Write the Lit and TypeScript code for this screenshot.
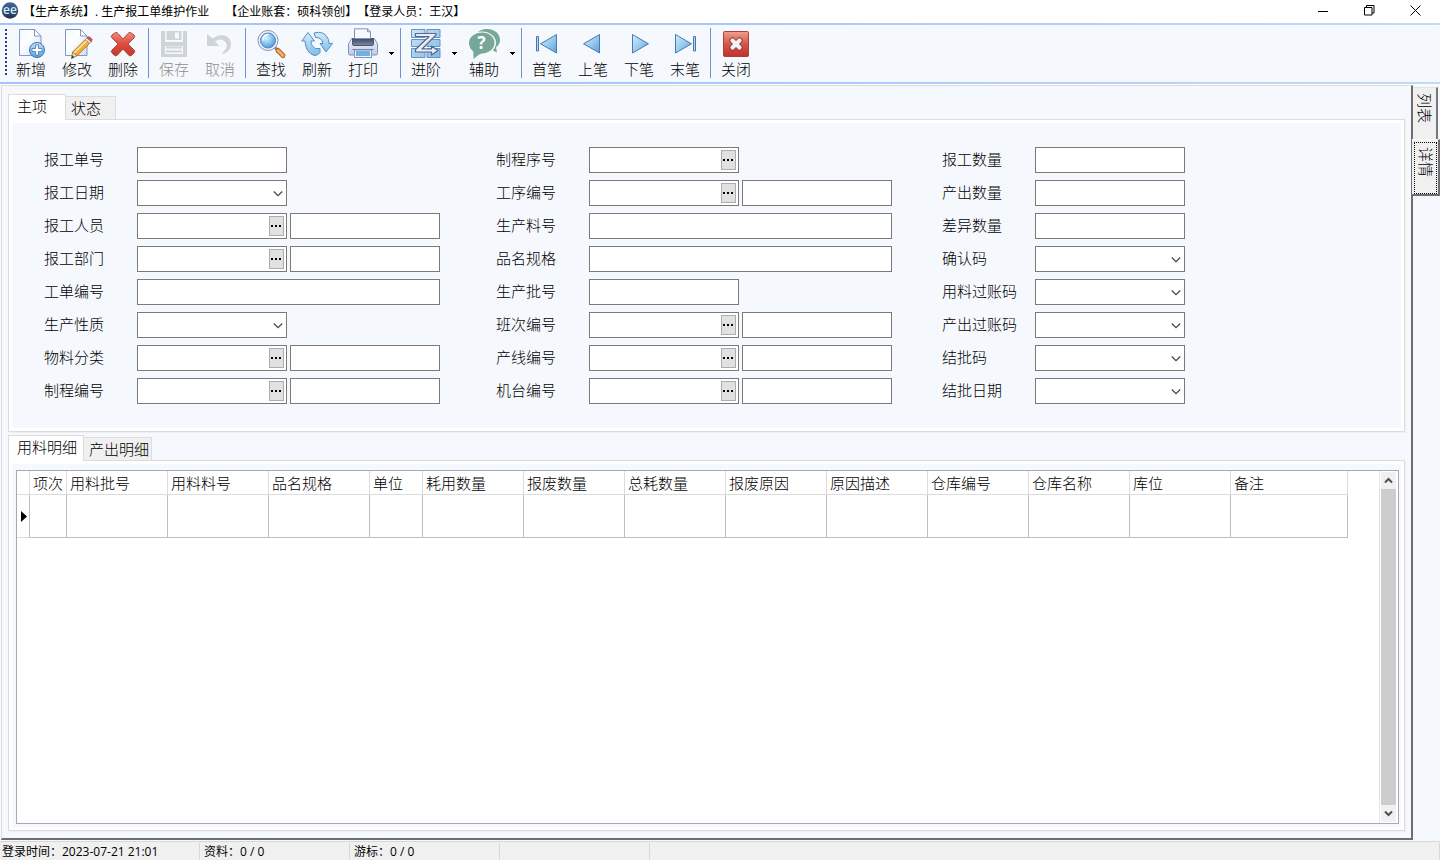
import { LitElement, html, svg, css, nothing } from "lit";
import { customElement, state } from "lit/decorators.js";
import { classMap } from "lit/directives/class-map.js";

type Field = { label: string; kind: "text" | "select" | "lookup" | "wide"; extra?: boolean };
type Tool = { id: string; label: string; disabled?: boolean; menu?: boolean };

const FORM: Field[][] = [
  [
    { label: "报工单号", kind: "text" },
    { label: "报工日期", kind: "select" },
    { label: "报工人员", kind: "lookup", extra: true },
    { label: "报工部门", kind: "lookup", extra: true },
    { label: "工单编号", kind: "wide" },
    { label: "生产性质", kind: "select" },
    { label: "物料分类", kind: "lookup", extra: true },
    { label: "制程编号", kind: "lookup", extra: true },
  ],
  [
    { label: "制程序号", kind: "lookup" },
    { label: "工序编号", kind: "lookup", extra: true },
    { label: "生产料号", kind: "wide" },
    { label: "品名规格", kind: "wide" },
    { label: "生产批号", kind: "text" },
    { label: "班次编号", kind: "lookup", extra: true },
    { label: "产线编号", kind: "lookup", extra: true },
    { label: "机台编号", kind: "lookup", extra: true },
  ],
  [
    { label: "报工数量", kind: "text" },
    { label: "产出数量", kind: "text" },
    { label: "差异数量", kind: "text" },
    { label: "确认码", kind: "select" },
    { label: "用料过账码", kind: "select" },
    { label: "产出过账码", kind: "select" },
    { label: "结批码", kind: "select" },
    { label: "结批日期", kind: "select" },
  ],
];

const TOOLS: Tool[][] = [
  [
    { id: "add", label: "新增" },
    { id: "edit", label: "修改" },
    { id: "delete", label: "删除" },
  ],
  [
    { id: "save", label: "保存", disabled: true },
    { id: "undo", label: "取消", disabled: true },
  ],
  [
    { id: "find", label: "查找" },
    { id: "refresh", label: "刷新" },
    { id: "print", label: "打印", menu: true },
  ],
  [
    { id: "advanced", label: "进阶", menu: true },
    { id: "help", label: "辅助", menu: true },
  ],
  [
    { id: "first", label: "首笔" },
    { id: "prev", label: "上笔" },
    { id: "next", label: "下笔" },
    { id: "last", label: "末笔" },
  ],
  [{ id: "close", label: "关闭" }],
];

const COLUMNS: [string, number][] = [
  ["项次", 37],
  ["用料批号", 101],
  ["用料料号", 101],
  ["品名规格", 101],
  ["单位", 53],
  ["耗用数量", 101],
  ["报废数量", 101],
  ["总耗数量", 101],
  ["报废原因", 101],
  ["原因描述", 101],
  ["仓库编号", 101],
  ["仓库名称", 101],
  ["库位", 101],
  ["备注", 117],
];

const page = svg`
  <path d="M4.500 1.500h15l6.500 6.500v19.500h-21.500z" fill="url(#paper)" stroke="#8396c6"/>
  <path d="M19.500 1.500v6.500h6.500z" fill="#fff" stroke="#8396c6" stroke-linejoin="round"/>`;

const paperFill = svg`<linearGradient id="paper" x1="0" y1="0" x2="1" y2="1"><stop offset="0" stop-color="#f2f6fd"/><stop offset=".4" stop-color="#fff"/><stop offset="1" stop-color="#cfdcf2"/></linearGradient>`;

const navFill = svg`<defs><linearGradient id="nav" x1="0" y1="0" x2="1" y2="1"><stop offset="0" stop-color="#d4ecfb"/><stop offset=".5" stop-color="#9accef"/><stop offset="1" stop-color="#5b9fd8"/></linearGradient></defs>`;

const ICONS: Record<string, unknown> = {
  add: svg`
    <defs>
      ${paperFill}
      <linearGradient id="addBlue" x1="0" y1="0" x2="0" y2="1"><stop offset="0" stop-color="#c4e2f7"/><stop offset="1" stop-color="#5aa3dc"/></linearGradient>
    </defs>
    ${page}
    <circle cx="22" cy="22" r="7.500" fill="url(#addBlue)" stroke="#3c6fae"/>
    <path d="M20.500 17h3v3.500h3.500v3h-3.500v3.500h-3v-3.500h-3.500v-3h3.500z" fill="#fff" stroke="#3f74b4" stroke-width=".8"/>`,
  edit: svg`
    <defs>${paperFill}</defs>
    ${page}
    <path d="M10.500 30.500l1.200-6.500 4.300 3.800z" fill="#f5d9b2" stroke="#7d5a3a" stroke-width=".7"/>
    <path d="M10.500 30.500l.6-3.200 2.300 2z" fill="#333"/>
    <path d="M11.700 24l12.600-12.500 4.300 3.900-12.600 12.400z" fill="#f3ad3f" stroke="#9a6a22" stroke-width=".8"/>
    <path d="M13 25l12.600-12.400" stroke="#ffe29a" stroke-width="1.500"/>
    <path d="M24.300 11.500l1.700-1.700 4.300 3.900-1.700 1.700z" fill="#e6e8ee" stroke="#777" stroke-width=".6"/>
    <path d="M26 9.800l.9-.8q1-.6 2 .2l1.800 1.600q.8 1 .1 1.900l-.5 1z" fill="#dd5a4c" stroke="#a33" stroke-width=".7"/>`,
  delete: svg`
    <defs><linearGradient id="delRed" x1="0" y1="0" x2="0" y2="1"><stop offset="0" stop-color="#f08b7b"/><stop offset=".5" stop-color="#dc4b3e"/><stop offset="1" stop-color="#c23a31"/></linearGradient></defs>
    <path d="M8.500 4.500Q10 4 11.500 6L16 11 20.500 6Q22 4 23.500 4.500L27 7Q28.500 8.500 27 10L21 16 27 22Q28.500 23.500 27 25L24.500 27.500Q23 28.500 21.500 27L16 21 10.500 27Q9 28.500 7.500 27.500L5 25Q3.500 23.500 5 22L11 16 5 10Q3.500 8.500 5 7z" fill="url(#delRed)" stroke="#b5453c"/>`,
  save: svg`
    <path d="M3 3h4v11h18V3h4v26H3z" fill="#cfd4d6"/>
    <path d="M8.500 3h15v9h-15z" fill="#cfd4d6"/>
    <path d="M17 4.500h4v6h-4z" fill="#f5f9fd"/>
    <path d="M3 16h26v13H3z" fill="#cfd4d6"/>
    <path d="M7 18h18v8H7z" fill="#f5f9fd"/>
    <path d="M8 19.500h16M8 23.500h16" stroke="#cfd4d6" stroke-width="2"/>`,
  undo: svg`
    <path d="M3 6v12h12.500l-4.500-4.500q4.500-3.800 9-.8c5 3.800 2.500 9.300-2 11.800l1.500 1.500q7-3 7.500-9.500c.2-7.500-8-13-18.500-6z" fill="#cfd4d6"/>`,
  find: svg`
    <defs><radialGradient id="lens" cx=".4" cy=".35" r=".7"><stop offset="0" stop-color="#d9f0ff"/><stop offset=".7" stop-color="#6bb4ee"/><stop offset="1" stop-color="#4a90d8"/></radialGradient></defs>
    <path d="M19.500 19l3 3" stroke="#7082a8" stroke-width="3"/>
    <path d="M23 22.500l5 5" stroke="#a9641e" stroke-width="5" stroke-linecap="round"/>
    <path d="M23 22.500l5 5" stroke="#f3b065" stroke-width="3" stroke-linecap="round"/>
    <circle cx="13" cy="12.500" r="10" fill="#eef3fa" stroke="#8795bd"/>
    <circle cx="13" cy="12.500" r="7.500" fill="url(#lens)" stroke="#5a7fb8"/>
    <path d="M8 12q.5-5 5-5.500" stroke="#fff" stroke-width="1.500" fill="none" stroke-linecap="round"/>`,
  refresh: svg`
    <defs><linearGradient id="ref" x1="0" y1="0" x2="0" y2="1"><stop offset="0" stop-color="#d5edfb"/><stop offset="1" stop-color="#7dbbe8"/></linearGradient></defs>
    <g fill="url(#ref)" stroke="#5b8dc5" stroke-linejoin="round">
      <path d="M7 4.500l6.500 8.500h-3.500q0 5 4.500 7.500h4.500v4q-1.500 3-6 3Q4.500 24.500 4 13H.8z"/>
      <path d="M13 5q10.500-3 14.500 6.500l.5 4h3.500l-6.500 8.500-6-8.500h3q-1-6-7.500-6z"/>
    </g>`,
  print: svg`
    <defs>
      <linearGradient id="prBody" x1="0" y1="0" x2="0" y2="1"><stop offset="0" stop-color="#f3f6fc"/><stop offset="1" stop-color="#bccae4"/></linearGradient>
      <linearGradient id="prDark" x1="0" y1="0" x2="0" y2="1"><stop offset="0" stop-color="#3d475f"/><stop offset="1" stop-color="#7d8ba8"/></linearGradient>
    </defs>
    <path d="M4.500 10.500h23l3 5.500v9.500q0 1.500-1.500 1.500H3q-1.500 0-1.500-1.500v-9.500z" fill="url(#prBody)" stroke="#8292b8"/>
    <path d="M5.500 10.500h21v5.500q0 1.500-1.500 1.500h-18q-1.500 0-1.500-1.500z" fill="url(#prDark)" stroke="#4a5672"/>
    <path d="M7.500.8h13l3 3v6.700h-16z" fill="#f7f9fd" stroke="#8292b8"/>
    <path d="M20.500.8v3h3" fill="none" stroke="#8292b8"/>
    <path d="M5.500 21.500h21" stroke="#66769b"/>
    <path d="M7.500 22h17v7.500h-17z" fill="#eff4fb" stroke="#8292b8"/>
    <path d="M9 23h14v5h-14z" fill="#6fb3e6"/>`,
  advanced: svg`
    <defs><linearGradient id="adv" x1="0" y1="0" x2="1" y2="1"><stop offset="0" stop-color="#cde5f7"/><stop offset="1" stop-color="#82b8e2"/></linearGradient></defs>
    <path d="M1.500 1.500h13.500v8h-13.500zM17 1.500h13v8h-13zM1.500 11.500h13.500v7h-13.500zM17 11.500h13v7h-13zM1.500 20.500h13.500v9h-13.500zM17 20.500h13v9h-13z" fill="url(#adv)" stroke="#6295ca"/>
    <path d="M5.500 5.500h20.500v1.500l-14 14h9.500v-3l6.500 4.500-6.500 4.500v-3h-16v-2.500l13.500-13h-13.500z" fill="#e9edf5" stroke="#57668a" stroke-width="1.200" stroke-linejoin="round"/>`,
  help: svg`
    <path d="M8 6Q12 1 19 1C27 1 32 6 32 12q0 4-4 7.500l1 5-6-3z" fill="#76a797"/>
    <ellipse cx="14" cy="15" rx="14" ry="11.500" fill="#f5f9fd"/>
    <path d="M14 4.500c7 0 12.500 4.500 12.500 10.300S21 25.500 14 25.500q-2 0-3.500 1.500L5.500 31l-.2-7.500Q1 20 1 15C1 9 7 4.500 14 4.500z" fill="#76a797"/>
    <text class="mark" x="13.500" y="21" text-anchor="middle">?</text>`,
  first: svg`${navFill}
    <path d="M5.500 8.500h2v14.500h-2z" fill="#a9d4f2" stroke="#4a78b4"/>
    <path d="M25.500 6.500v18.500l-16-9.200z" fill="url(#nav)" stroke="#4a78b4" stroke-linejoin="round"/>`,
  prev: svg`${navFill}<path d="M22.500 6.500v18.500l-16-9.200z" fill="url(#nav)" stroke="#4a78b4" stroke-linejoin="round"/>`,
  next: svg`${navFill}<path d="M9.500 6.500v18.500l16-9.200z" fill="url(#nav)" stroke="#4a78b4" stroke-linejoin="round"/>`,
  last: svg`${navFill}
    <path d="M6.500 6.500v18.500l16-9.200z" fill="url(#nav)" stroke="#4a78b4" stroke-linejoin="round"/>
    <path d="M24.500 8.500h2v14.500h-2z" fill="#a9d4f2" stroke="#4a78b4"/>`,
  close: svg`
    <defs><linearGradient id="cl" x1="0" y1="0" x2="0" y2="1"><stop offset="0" stop-color="#efa08e"/><stop offset=".5" stop-color="#d4574a"/><stop offset="1" stop-color="#c0302a"/></linearGradient></defs>
    <rect x="3.500" y="3.500" width="25" height="25" rx="1" fill="url(#cl)" stroke="#a8423a"/>
    <path d="M12.500 12.500l7 7M19.500 12.500l-7 7" stroke="#933" stroke-width="6" stroke-linecap="round"/>
    <path d="M12.500 12.500l7 7M19.500 12.500l-7 7" stroke="#f1f3f8" stroke-width="4.200" stroke-linecap="round"/>`,
};

@customElement("tool-icon")
class ToolIcon extends LitElement {
  static properties = { name: {} };
  declare name: string;
  static styles = css`
    :host { display: block; width: 32px; height: 32px; }
    svg { display: block; }
    .mark { font: bold 17px "Open Sans", sans-serif; fill: #fff; }
  `;
  render() {
    return html`<svg width="32" height="32" viewBox="0 0 32 32" fill="none" aria-hidden="true">${ICONS[this.name]}</svg>`;
  }
}

@customElement("app-root")
class AppRoot extends LitElement {
  @state() private upper = 0;
  @state() private lower = 0;
  @state() private side = 1;

  static styles = css`
    :host {
      display: block;
      --bg: #f5f9fd;
      --line: #dcdcdc;
      --field: #7a7a7a;
      color: #000;
      font-family: "Noto Sans CJK SC", sans-serif;
      font-size: 15px;
      font-weight: 300;
      line-height: 20px;
      text-spacing-trim: space-all;
    }
    * { box-sizing: border-box; }
    button, input, select { font: inherit; color: inherit; margin: 0; padding: 0; border: 0; border-radius: 0; background: none; }
    .window { display: flex; flex-direction: column; height: 100vh; background: var(--bg); overflow: hidden; }

    .title { display: flex; align-items: center; height: 23px; flex: none; padding-right: 2px; background: #fff; font-family: "Open Sans", "Noto Sans CJK SC", sans-serif; font-size: 12px; font-weight: 400; }
    .logo { display: block; margin: 0 3px 0 1px; }
    .logo text { font: 600 12px "Open Sans", sans-serif; fill: #d6e9f6; }
    .caption { flex: 1; display: flex; gap: 16px; white-space: pre; }
    .winbtn { width: 46px; height: 23px; padding-bottom: 2px; display: grid; place-items: center; }
    .winbtn svg { display: block; }

    .toolbar { display: flex; flex: none; height: 61px; padding: 3px 0 2px 5px; border: solid; border-width: 2px 0; border-image: linear-gradient(90deg, #a6c3f8, #a9c8fa 50%, #c1daf7) 1; }
    .grip { width: 3px; height: 46px; margin-top: 1px; background: repeating-linear-gradient(#24407c 0 2px, transparent 2px 4px) no-repeat 0 0 / 2px 100%; }
    .group { display: flex; }
    .group + .group { border-left: 1px solid #6a94d6; margin: 0 0 2px 2px; padding-left: 2px; }
    .tool { width: 46px; height: 52px; display: flex; flex-direction: column; align-items: center; white-space: nowrap; line-height: 18px; }
    .tool:disabled { color: #8c8c8c; }
    .drop { width: 12px; padding-right: 1px; display: grid; place-items: center; }

    .body { display: flex; flex: 1; min-height: 0; border-top: 1px solid #fff; }
    .main { flex: 1; min-width: 0; display: flex; flex-direction: column; margin-left: 1px; padding: 8px 6px 7px; border: 1px solid var(--line); border-right: 2px solid #6e6e6e; border-bottom: 2px solid #6e6e6e; }
    .tabs { display: flex; align-items: flex-end; height: 25px; flex: none; position: relative; z-index: 1; }
    .tab { height: 23px; padding: 0 2px 0 5px; text-align: left; background: #f0f0f0; border: 1px solid var(--line); border-left: 0; border-bottom: 0; }
    .tab.on { height: 26px; margin-bottom: -1px; padding: 0 6px 3px 8px; background: #fff; border-left: 1px solid var(--line); }
    .upper .tab { min-width: 50px; }
    .upper .tab.on { min-width: 58px; }
    .pane { border: 1px solid var(--line); padding: 3px; background: var(--bg); box-shadow: inset 0 0 0 3px #fff, 1px 1px 0 #efefef; }
    .upper + .pane { margin-bottom: 3px; }
    .pane.grow { flex: 1; min-height: 0; padding: 9px 5px 6px 7px; display: flex; }

    .form { display: grid; grid-template-columns: 452px 446px auto; justify-content: start; padding: 24px 0 24px 32px; }
    .col { display: grid; gap: 7px; align-content: start; }
    .row { display: grid; grid-template-columns: 93px 150px 150px; height: 26px; }
    .row label { line-height: 24px; white-space: nowrap; }
    .box { display: flex; position: relative; height: 26px; border: 1px solid var(--field); background: #fff; min-width: 0; }
    .box input, .box select { flex: 1; min-width: 0; width: 100%; padding: 0 4px; outline: none; }
    .box select { appearance: none; }
    .chev { position: absolute; right: 3px; top: 9px; pointer-events: none; }
    .span { grid-column: 2 / 4; margin-right: -3px; }
    .extra { margin-left: 3px; margin-right: -3px; }
    .more { width: 15px; flex: none; margin: 2px; display: grid; place-items: center; border: 1px solid #adadad; background: #e1e1e1; }

    .sheet { flex: 1; display: flex; min-width: 0; border: 1px solid #a5a9b2; background: #fff; }
    .scroll { flex: 1; min-width: 0; overflow: hidden; }
    table { border-collapse: separate; border-spacing: 0; table-layout: fixed; width: 0; }
    th { height: 24px; padding: 0 0 0 3px; font-weight: inherit; text-align: left; white-space: nowrap; border-right: 1px solid var(--line); border-bottom: 1px solid var(--line); }
    td { height: 43px; padding: 0; border-right: 1px solid #bebebe; border-bottom: 1px solid #bebebe; }
    td.mark { border-bottom-color: var(--line); }
    td.mark svg { display: block; margin-left: 4px; }
    .vbar { width: 19px; display: flex; flex-direction: column; border-left: 1px solid #e3e3e3; padding: 1px 2px 1px 1px; background: #f0f0f0 content-box; }
    .vbar button { height: 17px; display: grid; place-items: center; }
    .thumb { flex: 1; background: #cdcdcd; }

    .side { width: 27px; flex: none; padding-top: 2px; }
    .vtab { display: block; writing-mode: vertical-rl; text-orientation: sideways; width: 25px; height: 52px; padding-top: 5px; line-height: 22px; text-align: left; background: #f0f0f0; border-top: 1px solid #e3e3e3; border-right: 2px solid #777; }
    .vtab.on { position: relative; width: 28px; height: 57px; margin-left: -1px; padding: 2px 1px 0 2px; border: 0; border-top: 1px solid #fff; border-right: 2px solid #6e6e6e; border-bottom: 2px solid #6e6e6e; }
    .focus { display: block; width: 23px; height: 52px; padding-top: 4px; line-height: 20px; border: 1px dotted #000; }

    .status { display: flex; flex: none; height: 19px; margin-top: 1px; border-top: 1px solid #d7d7d7; background: #f0f0f0; font-family: "Open Sans", "Noto Sans CJK SC", sans-serif; font-size: 12px; font-weight: 400; line-height: 18px; }
    .cell { width: 150px; padding-left: 4px; margin-top: 1px; border-right: 1px solid #d7d7d7; white-space: pre; }
    .cell:first-child { width: 200px; padding-left: 2px; }
    .cell:last-child { flex: 1; }
  `;

  private chevron(up = false) {
    return html`<svg width="9" height="7" viewBox="0 0 9 7" fill="none" stroke="#505050" stroke-width="2"><path d=${up ? "M1 5.500L4.500 2L8 5.500" : "M1 1.500L4.500 5L8 1.500"}/></svg>`;
  }

  private tabs(names: string[], active: number, pick: (i: number) => void, cls = "") {
    return html`<div class="tabs ${cls}" role="tablist">
      ${names.map((n, i) => html`<button role="tab" aria-selected=${i === active} class=${classMap({ tab: true, on: i === active })} @click=${() => pick(i)}>${n}</button>`)}
    </div>`;
  }

  private field(f: Field, id: string) {
    const control =
      f.kind === "select"
        ? html`<div class="box"><select id=${id}></select><svg class="chev" width="10" height="8" viewBox="0 0 10 8" fill="none" stroke="#444" stroke-width="1.200"><path d="M.8 1.500L5 5.700L9.200 1.500"/></svg></div>`
        : f.kind === "lookup"
          ? html`<div class="box"><input id=${id} type="text" /><button class="more" aria-label="${f.label} 查找"><svg width="11" height="2" viewBox="0 0 11 2"><path d="M0 0h2v2H0zM4 0h2v2H4zM8 0h2v2H8z"/></svg></button></div>`
          : html`<div class=${classMap({ box: true, span: f.kind === "wide" })}><input id=${id} type="text" /></div>`;
    return html`<div class="row">
      <label for=${id}>${f.label}</label>${control}
      ${f.extra ? html`<div class="box extra"><input type="text" aria-label="${f.label}名称" /></div>` : nothing}
    </div>`;
  }

  render() {
    return html`<div class="window">
      <header class="title">
        <svg class="logo" width="19" height="19" viewBox="0 0 19 19"><defs><linearGradient id="lg" x1="0" y1="0" x2="0" y2="1"><stop offset="0" stop-color="#426c97"/><stop offset="1" stop-color="#1d3454"/></linearGradient></defs><circle cx="9" cy="8.500" r="8.200" fill="url(#lg)"/><text x="9" y="12" text-anchor="middle">ee</text></svg>
        <div class="caption"><span>【生产系统】. 生产报工单维护作业</span><span>【企业账套：硕科领创】【登录人员：王汉】</span></div>
        <button class="winbtn" aria-label="最小化"><svg width="10" height="10"><path d="M0 5.500h10" stroke="#000"/></svg></button>
        <button class="winbtn" aria-label="还原"><svg width="11" height="11" fill="none" stroke="#000"><path d="M.5 2.500h7.500v7.500h-7.500zM2.500 2.500v-2h7.500v7.500h-2"/></svg></button>
        <button class="winbtn" aria-label="关闭窗口"><svg width="11" height="11" stroke="#000"><path d="M.5.5l10 10M10.500.5l-10 10"/></svg></button>
      </header>

      <nav class="toolbar">
        <span class="grip"></span>
        ${TOOLS.map((g) => html`<div class="group">${g.map((t) => html`
          <button class="tool" ?disabled=${t.disabled}><tool-icon .name=${t.id}></tool-icon>${t.label}</button>
          ${t.menu ? html`<button class="drop" aria-label="${t.label}菜单"><svg width="5" height="3" viewBox="0 0 5 3"><path d="M0 0h5v1H4v1H3v1H2V2H1V1H0z"/></svg></button>` : nothing}`)}</div>`)}
      </nav>

      <div class="body">
        <main class="main">
          ${this.tabs(["主项", "状态"], this.upper, (i) => (this.upper = i), "upper")}
          <section class="pane">
            <div class="form">
              ${FORM.map((c, ci) => html`<div class="col">${c.map((f, i) => this.field(f, `f${ci}-${i}`))}</div>`)}
            </div>
          </section>
          ${this.tabs(["用料明细", "产出明细"], this.lower, (i) => (this.lower = i))}
          <section class="pane grow">
            <div class="sheet">
              <div class="scroll">
                <table>
                  <colgroup><col style="width:13px" />${COLUMNS.map(([, w]) => html`<col style="width:${w}px" />`)}</colgroup>
                  <thead><tr><th></th>${COLUMNS.map(([n]) => html`<th scope="col">${n}</th>`)}</tr></thead>
                  <tbody><tr><td class="mark"><svg width="6" height="11" viewBox="0 0 6 11"><path d="M0 0l6 5.500-6 5.500z"/></svg></td>${COLUMNS.map(() => html`<td></td>`)}</tr></tbody>
                </table>
              </div>
              <div class="vbar">
                <button aria-label="向上">${this.chevron(true)}</button>
                <div class="thumb"></div>
                <button aria-label="向下">${this.chevron()}</button>
              </div>
            </div>
          </section>
        </main>
        <aside class="side">
          ${["列表", "详情"].map((n, i) => html`<button class=${classMap({ vtab: true, on: this.side === i })} @click=${() => (this.side = i)}>${this.side === i ? html`<span class="focus">${n}</span>` : n}</button>`)}
        </aside>
      </div>

      <footer class="status">
        <div class="cell">登录时间：2023-07-21 21:01</div>
        <div class="cell">资料：0 / 0</div>
        <div class="cell">游标：0 / 0</div>
        <div class="cell"></div>
        <div class="cell"></div>
      </footer>
    </div>`;
  }
}
